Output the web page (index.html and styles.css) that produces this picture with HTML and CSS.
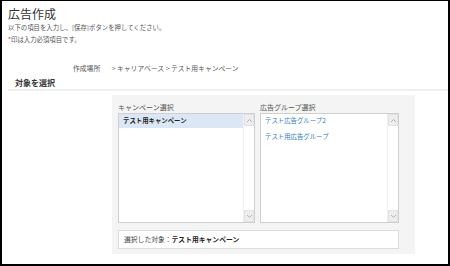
FILE: index.html
```html
<!DOCTYPE html>
<html>
    <head>
        <meta charset="utf-8" />
        <title>広告作成</title>
        <link rel="stylesheet" href="styles.css">
    </head>
    <body>
        <div class="page">
            <h1 class="title">広告作成</h1>
            <p class="note">以下の項目を入力し、[保存]ボタンを押してください。</p>
            <p class="note"><span class="req">*</span>印は入力必須項目です。</p>

            <div class="crumbs">
                <span class="crumbs_label">作成場所</span>
                <span>&gt; キャリアベース &gt; テスト用キャンペーン</span>
            </div>

            <div class="section_head">対象を選択</div>

            <div class="panel">
                <div class="cols">
                    <div class="col col_left">
                        <div class="col_label">キャンペーン選択</div>
                        <div class="listbox">
                            <div class="items">
                                <div class="item selected">テスト用キャンペーン</div>
                            </div>
                            <div class="scroll">
                                <div class="scroll_btn">
                                    <svg width="7" height="5" viewBox="0 0 7 5"><path d="M1 4 L3.5 1.5 L6 4" fill="none" stroke="#b4b4b4" stroke-width="1"/></svg>
                                </div>
                                <div class="scroll_btn">
                                    <svg width="7" height="5" viewBox="0 0 7 5"><path d="M1 1 L3.5 3.5 L6 1" fill="none" stroke="#b4b4b4" stroke-width="1"/></svg>
                                </div>
                            </div>
                        </div>
                    </div>
                    <div class="col col_right">
                        <div class="col_label">広告グループ選択</div>
                        <div class="listbox">
                            <div class="items">
                                <div class="item link">テスト広告グループ2</div>
                                <div class="item link">テスト用広告グループ</div>
                            </div>
                            <div class="scroll">
                                <div class="scroll_btn">
                                    <svg width="7" height="5" viewBox="0 0 7 5"><path d="M1 4 L3.5 1.5 L6 4" fill="none" stroke="#b4b4b4" stroke-width="1"/></svg>
                                </div>
                                <div class="scroll_btn">
                                    <svg width="7" height="5" viewBox="0 0 7 5"><path d="M1 1 L3.5 3.5 L6 1" fill="none" stroke="#b4b4b4" stroke-width="1"/></svg>
                                </div>
                            </div>
                        </div>
                    </div>
                </div>

                <div class="chosen">選択した対象：<b>テスト用キャンペーン</b></div>
            </div>
        </div>
    </body>
</html>
```

FILE: styles.css
```css
html, body {
    margin: 0px;
    padding: 0px;
    background-color: #000;
}

body {
    font-family: "Noto Sans CJK JP", "Noto Sans", sans-serif;
    color: #444;
}

.page {
    width: 450px;
    height: 266px;
    box-sizing: border-box;
    border-style: solid;
    border-color: #000;
    border-width: 1px 2px 2px 2px;
    background-color: #fff;
    padding: 6px 0px 0px 4px;
    overflow: hidden;
}

.title {
    margin: 0px 0px 1px 2px;
    font-size: 12px;
    line-height: 14px;
    font-weight: normal;
    color: #333;
}

.note {
    margin: 0px 0px 0px 2px;
    font-size: 6.4px;
    line-height: 12px;
    color: #555;
}

.req {
    color: #e60012;
}

.crumbs {
    margin-top: 16px;
    padding-left: 67px;
    font-size: 6.8px;
    line-height: 12px;
    color: #555;
}

.crumbs_label {
    margin-right: 10px;
}

.section_head {
    margin-top: 3px;
    margin-left: 2px;
    padding-left: 7px;
    font-size: 8px;
    line-height: 12px;
    font-weight: bold;
    color: #333;
    border-bottom: 2px solid #f0f0f0;
}

.panel {
    width: 303px;
    height: 159px;
    box-sizing: border-box;
    margin: 4px 0px 0px 106px;
    padding: 7px 16px 5px 6px;
    background-color: #f4f4f4;
}

.cols {
    display: flex;
    gap: 5px;
}

.col_left {
    width: 137px;
}

.col_right {
    width: 139px;
}

.col_label {
    font-size: 7px;
    line-height: 11px;
    color: #555;
}

.listbox {
    display: flex;
    height: 110px;
    box-sizing: border-box;
    border: 1px solid #cfcfcf;
    background-color: #fff;
}

.items {
    flex: 1;
}

.item {
    font-size: 6.4px;
    line-height: 14px;
    padding-left: 4px;
    margin-bottom: 2px;
}

.item.selected {
    background-color: #dce7f5;
    font-weight: bold;
    color: #222;
}

.item.link {
    color: #2f7bbd;
}

.scroll {
    width: 10px;
    display: flex;
    flex-direction: column;
    justify-content: space-between;
    border-left: 1px solid #f0f0f0;
}

.scroll_btn {
    height: 12px;
    display: flex;
    align-items: center;
    justify-content: center;
    background-color: #eeeeee;
    border: 1px solid #e2e2e2;
    box-sizing: border-box;
}

.chosen {
    margin-top: 7px;
    height: 19px;
    box-sizing: border-box;
    border: 1px solid #dcdcdc;
    background-color: #fff;
    padding-left: 5px;
    font-size: 6.8px;
    line-height: 17px;
    color: #444;
}

.chosen b {
    color: #222;
}
```
